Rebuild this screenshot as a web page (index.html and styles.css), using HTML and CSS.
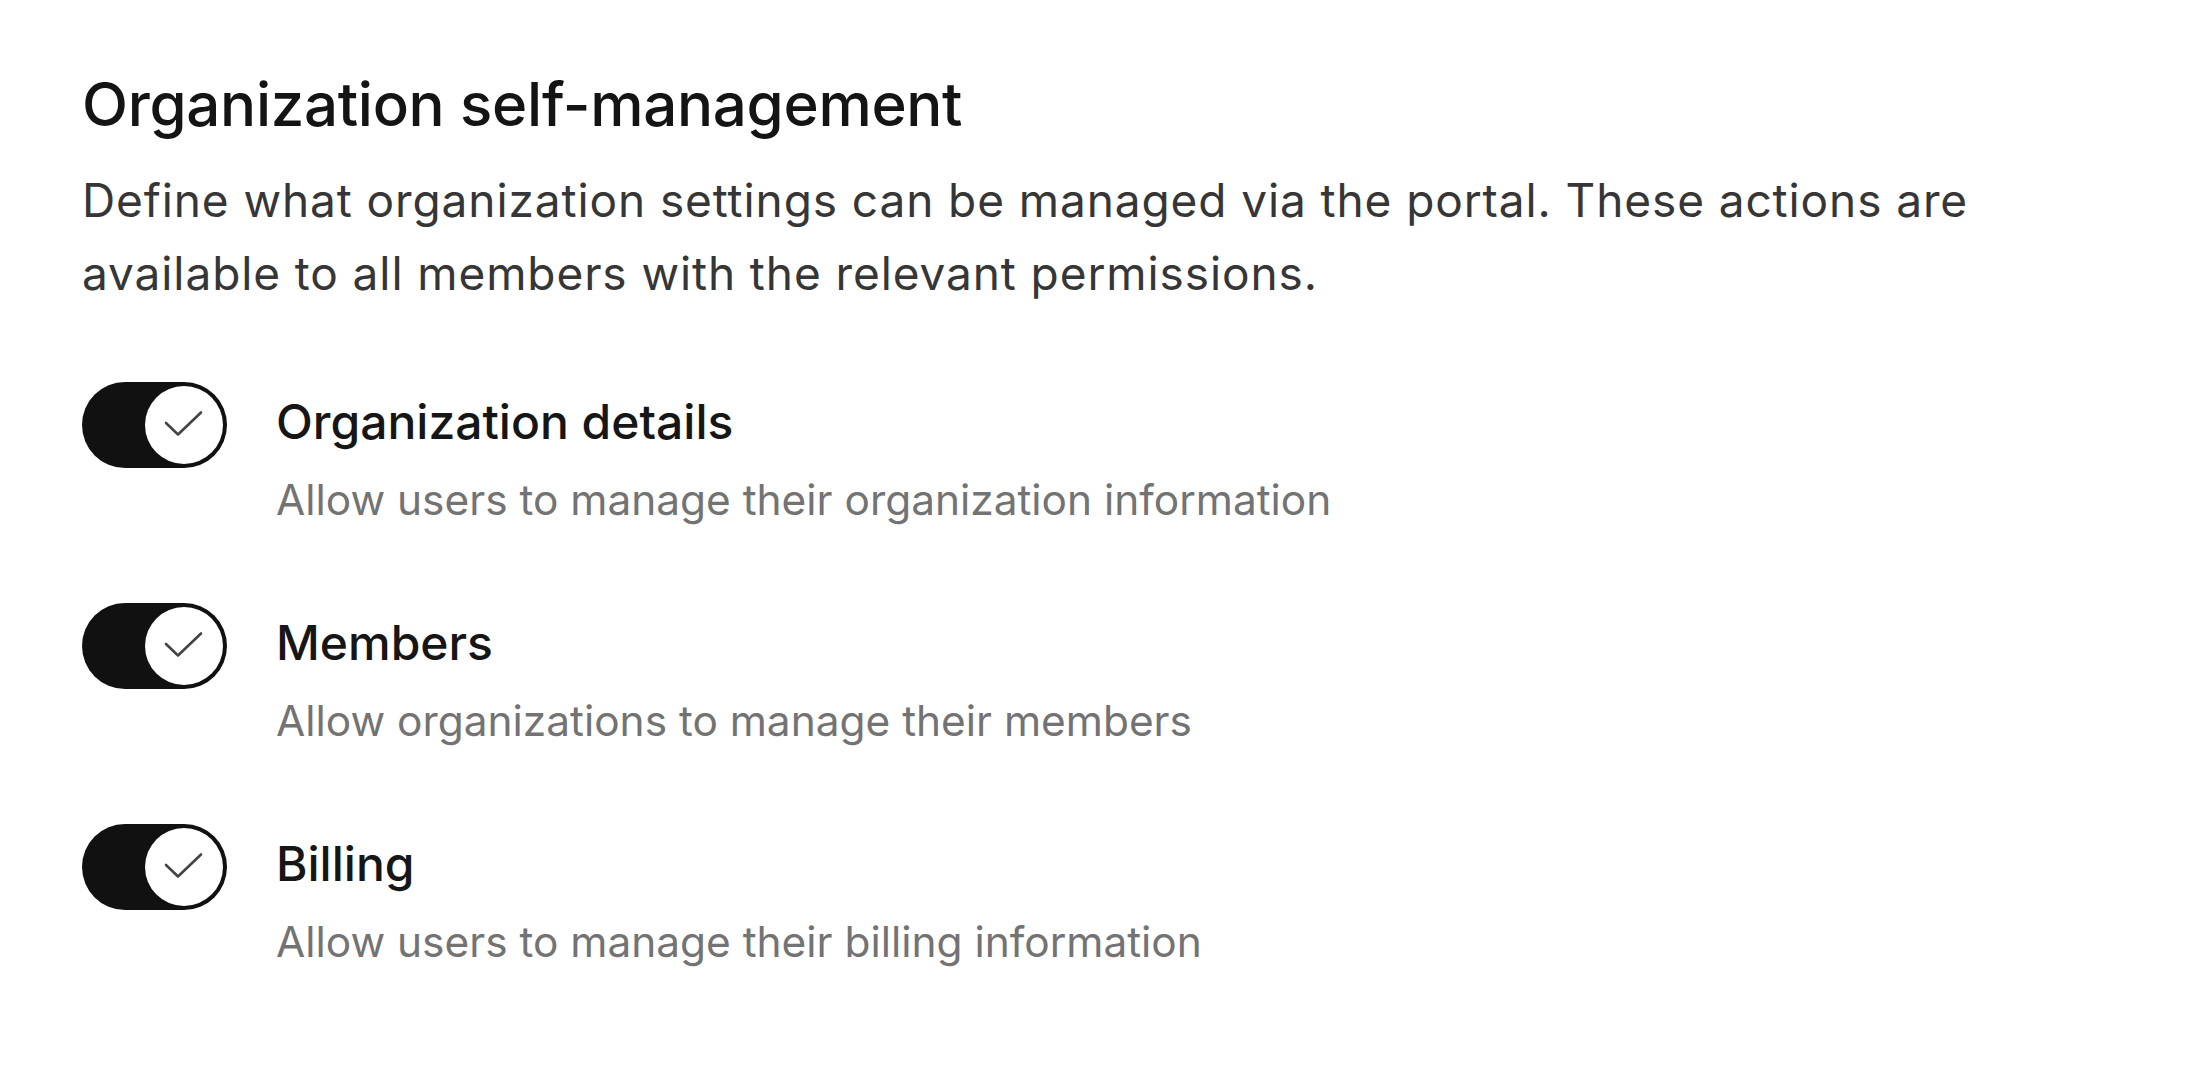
FILE: index.html
```html
<!DOCTYPE html>
<html lang="en">
<head>
<meta charset="utf-8">
<title>Organization self-management</title>
<link rel="stylesheet" href="styles.css">
</head>
<body>
<main class="page">
  <section class="section">
    <h1 class="title">Organization self-management</h1>
    <p class="intro">Define what organization settings can be managed via the portal. These actions are available to all members with the relevant permissions.</p>
    <ul class="options">
      <li class="option">
        <span class="toggle" role="switch" aria-checked="true">
          <span class="knob"><svg viewBox="0 0 78 78" class="check"><path d="M21 37 L33 48.5 L56 26.5"/></svg></span>
        </span>
        <div class="option-text">
          <div class="option-label">Organization details</div>
          <div class="option-desc">Allow users to manage their organization information</div>
        </div>
      </li>
      <li class="option">
        <span class="toggle" role="switch" aria-checked="true">
          <span class="knob"><svg viewBox="0 0 78 78" class="check"><path d="M21 37 L33 48.5 L56 26.5"/></svg></span>
        </span>
        <div class="option-text">
          <div class="option-label">Members</div>
          <div class="option-desc">Allow organizations to manage their members</div>
        </div>
      </li>
      <li class="option">
        <span class="toggle" role="switch" aria-checked="true">
          <span class="knob"><svg viewBox="0 0 78 78" class="check"><path d="M21 37 L33 48.5 L56 26.5"/></svg></span>
        </span>
        <div class="option-text">
          <div class="option-label">Billing</div>
          <div class="option-desc">Allow users to manage their billing information</div>
        </div>
      </li>
    </ul>
  </section>
</main>
</body>
</html>
```

FILE: styles.css
```css
* { box-sizing: border-box; }

html, body {
  margin: 0;
  padding: 0;
  background: #ffffff;
}

body {
  font-family: Inter, "Noto Sans", "Liberation Sans", sans-serif;
  color: #171717;
}

.page {
  padding: 68px 82px 0 82px;
}

.section {
  display: flex;
  flex-direction: column;
}

.title {
  margin: 0;
  font-size: 60px;
  line-height: 72px;
  font-weight: 500;
  color: #141414;
  letter-spacing: -0.3px;
}

.intro {
  margin: 24px 0 0 0;
  font-size: 46px;
  line-height: 73px;
  font-weight: 400;
  color: #363636;
  letter-spacing: 0.9px;
}

.options {
  list-style: none;
  margin: 72px 0 0 0;
  padding: 0;
  display: flex;
  flex-direction: column;
  gap: 71px;
}

.option {
  display: flex;
  align-items: flex-start;
  gap: 49px;
}

.toggle {
  flex: 0 0 auto;
  width: 145px;
  height: 86px;
  border-radius: 43px;
  background: #111111;
  padding: 4px;
  display: flex;
  justify-content: flex-end;
  align-items: center;
}

.knob {
  width: 78px;
  height: 78px;
  border-radius: 50%;
  background: #ffffff;
  display: flex;
}

.check {
  width: 78px;
  height: 78px;
}

.check path {
  fill: none;
  stroke: #444444;
  stroke-width: 2.6;
  stroke-linecap: round;
  stroke-linejoin: round;
}

.option-text {
  padding-top: 12px;
  display: flex;
  flex-direction: column;
  gap: 18px;
}

.option-label {
  font-size: 48px;
  line-height: 56px;
  font-weight: 500;
  color: #161616;
}

.option-desc {
  font-size: 42.4px;
  line-height: 64px;
  color: #737373;
}
```
